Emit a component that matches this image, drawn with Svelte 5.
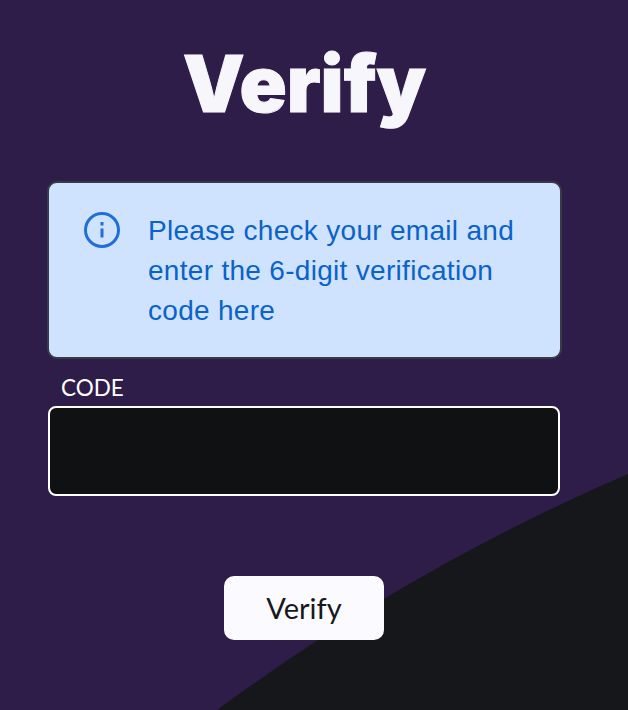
<script lang="ts">
	let code = $state('');
</script>

<main class="page">
	<svg class="swoosh" viewBox="0 0 628 710" aria-hidden="true">
		<path d="M217 710Q410 568 628 474V710Z" />
	</svg>

	<h1>Verify</h1>

	<div class="notice">
		<svg class="info" viewBox="0 0 36 36" aria-hidden="true">
			<circle cx="18" cy="18" r="16.5" />
			<path d="M18 16.5v9M18 10v3.5" />
		</svg>
		<p>Please check your email and enter the 6-digit verification code here</p>
	</div>

	<form class="form" onsubmit={(e) => e.preventDefault()}>
		<label for="code">CODE</label>
		<input id="code" bind:value={code} />
		<button type="submit">Verify</button>
	</form>
</main>

<style>
	:global(body) {
		margin: 0;
		background: #2e1d49;
	}

	.page {
		position: relative;
		height: 710px;
		overflow: hidden;
		padding: 0 66px 0 47px;
		box-sizing: border-box;
		display: flex;
		flex-direction: column;
		font-family: "Liberation Sans", sans-serif;
	}

	.swoosh {
		position: absolute;
		inset: 0;
		width: 628px;
		height: 710px;
	}

	.swoosh path {
		fill: #15171b;
	}

	h1 {
		position: relative;
		margin: 32px 0 0;
		height: 104px;
		line-height: 104px;
		font-family: Inter, sans-serif;
		font-size: 78px;
		font-weight: 900;
		-webkit-text-stroke: 1px #f6f6fb;
		color: #f6f6fb;
		text-align: center;
	}

	.notice {
		position: relative;
		margin-top: 45px;
		height: 178px;
		box-sizing: border-box;
		display: flex;
		gap: 28px;
		padding: 29px 30px 0 35px;
		background: #cfe3ff;
		border: 2px solid #3a3a46;
		border-radius: 10px;
	}

	.info {
		flex: none;
		width: 36px;
		height: 36px;
		fill: none;
		stroke: #1f6fd6;
		stroke-width: 3;
	}

	.notice p {
		margin: -1px 0 0;
		font-size: 28px;
		letter-spacing: 0.3px;
		line-height: 40px;
		color: #0b62c8;
	}

	.form {
		position: relative;
		display: flex;
		flex-direction: column;
		margin-top: 17px;
	}

	label {
		padding-left: 14px;
		height: 30px;
		line-height: 24px;
		font-family: Lato, sans-serif;
		font-size: 22.5px;
		color: #fff;
	}

	input {
		height: 90px;
		width: 512px;
		margin-left: 1px;
		box-sizing: border-box;
		background: #101113;
		border: 2px solid #fff;
		border-radius: 8px;
		color: #fff;
		outline: none;
	}

	button {
		align-self: flex-start;
		margin: 80px 0 0 177px;
		padding: 0 0 2px;
		width: 160px;
		height: 64px;
		background: #fbfbff;
		border: 0;
		border-radius: 10px;
		font-family: Lato, sans-serif;
		font-size: 29px;
		color: #16181c;
	}
</style>
